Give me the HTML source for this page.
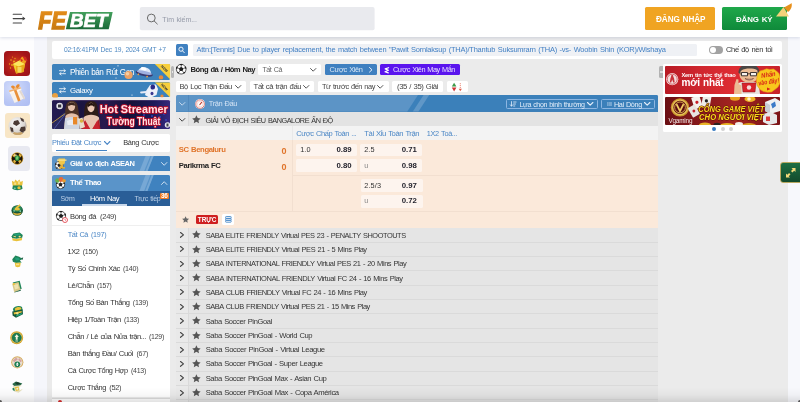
<!DOCTYPE html>
<html lang="vi"><head><meta charset="utf-8"><title>FEBET</title>
<style>
*{box-sizing:border-box;margin:0;padding:0}
html,body{width:800px;height:402px;overflow:hidden}
body{position:relative;background:#ebebeb;font-family:"Liberation Sans",sans-serif;color:#333;font-size:8.5px}
.a{position:absolute}
.t{position:absolute;white-space:nowrap;line-height:10px;word-spacing:.7px}
.b{font-weight:bold}
svg{position:absolute;overflow:visible}
#app{position:absolute;left:0;top:0;width:800px;height:402px;overflow:hidden;will-change:transform}
</style></head><body>
<div id="app">
<div class="a" style="left:0px;top:37px;width:34px;height:365px;background:#fdfdfe;"></div><div class="a" style="left:34px;top:37px;width:13px;height:365px;background:#f5f6fb;"></div><div class="a" style="left:788px;top:37px;width:12px;height:365px;background:#f7f8fc;"></div>
<div class="a" style="left:52px;top:41px;width:730px;height:18px;background:#fff;border-radius:2px"></div><div class="t" style="left:64.00px;top:44.500px;font-size:6.7px;color:#4f89c2;letter-spacing:-0.183px;">02:16:41PM Dec 19, 2024 GMT +7</div><div class="a" style="left:175.5px;top:44px;width:12.5px;height:11.5px;background:#3f80c0;border-radius:1.5px"></div><svg style="left:176.3px;top:44px" width="11" height="11.5" viewBox="0 0 11 11.5"><circle cx="5" cy="5.2" r="2.1" fill="none" stroke="#fff" stroke-width="0.9"/><path d="M6.6 6.9L8.3 8.7" stroke="#fff" stroke-width="0.9" stroke-linecap="round"/></svg><div class="a" style="left:193px;top:44px;width:504px;height:12px;background:#eff1f5;border-radius:1.5px"></div><div class="t" style="left:196.50px;top:44.500px;font-size:7.46px;color:#4380c4;letter-spacing:-0.218px;">Attn:[Tennis] Due to player replacement, the match between &quot;Pawit Sornlaksup (THA)/Thantub Suksumrarn (THA) -vs- Woobin Shin (KOR)/Wishaya</div><div class="a" style="left:708.7px;top:45.8px;width:14.8px;height:7.8px;background:#a2a2a2;border-radius:4px"></div><div class="a" style="left:709.5px;top:46.5px;width:6.4px;height:6.4px;background:#fff;border-radius:50%"></div><div class="t" style="left:726.00px;top:44.500px;font-size:7.51px;color:#333;letter-spacing:-0.318px;">Chế độ nền tối</div>
<div class="a" style="left:4.4px;top:50.9px;width:25.5px;height:25.5px;background:#a5161a;border-radius:3.5px;background:radial-gradient(circle at 45% 50%,#d8501a 0,#b8241a 38%,#a3151a 70%,#9a1218 100%)"></div><svg style="left:4.4px;top:50.9px" width="25.5" height="25.500" viewBox="0 0 25.500 25.500"><g fill="#f4b81c" opacity=".85"><circle cx="7" cy="9" r=".8"/><circle cx="5.500" cy="13" r=".7"/><circle cx="8.500" cy="6" r=".6"/><circle cx="10" cy="10.500" r="1"/><circle cx="6.500" cy="17" r=".7"/><circle cx="11" cy="7.500" r=".7"/><circle cx="8" cy="14" r=".9"/></g><path d="M9 13L15.500 9.500L21 13L19.500 21L12 22.500Z" fill="#f3cf2a"/><path d="M12 14.500L12 22.500L19.500 21L21 13Z" fill="#e8a818"/><path d="M9 13L15.500 9.500L21 13L14.500 15.500Z" fill="#fbe560"/><path d="M13.500 16H17.500V21.500H13.500Z" fill="#f7e070" opacity=".8"/><path d="M15 10L18 5.500L23 8.500L21 13Z" fill="#f0a01c"/><path d="M18.500 5L22 6L23.500 10L20.500 9.500ZM16 7.500L19 9L17.500 11Z" fill="#d02a20"/></svg><div class="a" style="left:4.4px;top:80.6px;width:25.5px;height:25px;background:#b8c6f5;border-radius:3.500px;background:radial-gradient(circle at 35% 30%,#d5defb 0,#b8c6f5 60%,#aebdf2 100%)"></div><svg style="left:4.400px;top:80.600px" width="25.500" height="25" viewBox="0 0 25.500 25"><path d="M5.500 11L16 7.500L21 17L10.500 22Z" fill="#f6f1ec"/><path d="M16 7.500L21 17L20 19L14.500 9Z" fill="#e2d8d0"/><path d="M5 9.500L16.500 6L17.500 9L6.500 12.800Z" fill="#fdf6ee"/><path d="M9.500 8.500L12 7.700L16.500 19.500L14 20.500Z" fill="#e8903a"/><path d="M5 9.500L16.500 6L17 7.500L5.500 11Z" fill="#f0b070"/><path d="M7 5.500C8.500 3.500 11 4.500 11.500 7.500C9.500 8.500 7.500 7.500 7 5.500ZM15.500 3.500C13.500 2.500 11.500 4.500 11.500 7.500C14 7.500 16 6 15.500 3.500Z" fill="#e88a30"/><circle cx="11.500" cy="7.300" r="1.200" fill="#f6c080"/></svg><div class="a" style="left:4.5px;top:113px;width:25px;height:25px;background:#f8e6c6;border-radius:3px"></div><svg style="left:4.5px;top:113px" width="25" height="25" viewBox="0 0 25 25"><defs><radialGradient id="sb" cx=".4" cy=".35" r=".7"><stop offset="0" stop-color="#fff"/><stop offset=".7" stop-color="#d8d4d0"/><stop offset="1" stop-color="#8a7a70"/></radialGradient></defs><circle cx="12.5" cy="13" r="9" fill="url(#sb)"/><path d="M9 8L13 7L15 10.5L11.5 13L8 11ZM16 14L20 13.5L20.5 17.5L17 19.5L14.5 17.5ZM5 14L8 15L8.5 19L6 18.5ZM15 4.5L18.5 6L19 9L16.5 8Z" fill="#4a3a34"/><path d="M8 20.5C11 22.5 15 22.5 18 20.5L16.5 19C13.5 20 11 20 9 19Z" fill="#c9a46a"/></svg><div class="a" style="left:7.5px;top:146px;width:22px;height:25px;background:#e8e9f1;border-radius:3.5px"></div><svg style="left:10.8px;top:152.2px" width="12.4" height="12.8" viewBox="0 0 20 20" preserveAspectRatio="none"><circle cx="10" cy="10" r="9.800" fill="#c9982c"/><circle cx="10" cy="10" r="8.600" fill="#1c140a"/><path d="M2.500 6L6 2.500L8 5L5 8.500ZM17.500 6L14 2.500L12 5L15 8.500ZM3 14L6 17.500L8.500 15L5.500 12ZM17 14L14 17.500L11.500 15L14.500 12Z" fill="#e2b13a"/><path d="M10 4.500L14.200 8L12.600 13.500H7.400L5.800 8Z" fill="#2e9a48"/><path d="M10 6L12 9L10.500 12H8.500L8 9Z" fill="#7fd070"/><ellipse cx="7" cy="5" rx="3" ry="1.600" fill="#fff3c0" opacity=".55"/></svg><svg style="left:10.8px;top:178.8px" width="12.8" height="11.6" viewBox="0 0 20 20" preserveAspectRatio="none"><path d="M2 9L1.500 3L5 5L7 1L10 4.500L13 1L15 5L18.500 3L18 9L17 12H3Z" fill="#e9c23c"/><path d="M5 6H8V10H5ZM11 4H14V9H11Z" fill="#f6e08a"/><path d="M3 11H17L18 17C15 20 5 20 2 17Z" fill="#1f8458"/><circle cx="12.500" cy="15" r="2.600" fill="#e9c23c"/><circle cx="6" cy="16" r="1.500" fill="#7ec8a0"/></svg><svg style="left:10.8px;top:203px" width="12.4" height="13" viewBox="0 0 20 20" preserveAspectRatio="none"><ellipse cx="10" cy="11.500" rx="9.300" ry="8" fill="#15573a"/><ellipse cx="10" cy="9" rx="7.500" ry="4.500" fill="#2a8a5a"/><path d="M7 7L14 2L15.500 4L10 9Z" fill="#e9c23c"/><ellipse cx="10" cy="9.500" rx="4.500" ry="2.200" fill="#e9c23c"/><path d="M3 14C6 17 14 17 17 14L16 17C13 19.500 7 19.500 4 17Z" fill="#d0a838"/><circle cx="5" cy="12" r="1.300" fill="#8ad0a8"/><circle cx="15" cy="12.500" r="1.300" fill="#8ad0a8"/></svg><svg style="left:10.6px;top:232px" width="12.4" height="9.6" viewBox="0 0 20 20" preserveAspectRatio="none"><path d="M1 9L4 3L14 1L19 6L18 12L9 14L2 13Z" fill="#1f8458"/><path d="M5 4L13 2.500L16 6L7 8Z" fill="#23a07a"/><path d="M2 13L9 14.500L18 12L17.500 17L9 19.500L2.500 17.500Z" fill="#e9c23c"/><path d="M4 9L8 10" stroke="#f6e08a" stroke-width="1.600"/><circle cx="14" cy="9.500" r="1.800" fill="#f6e08a"/></svg><svg style="left:11px;top:255px" width="12.6" height="12.4" viewBox="0 0 20 20" preserveAspectRatio="none"><path d="M2 7L7 1L13 3L18.500 6.500L14 9L17 12L8 13L3 11Z" fill="#1f8458"/><path d="M6 4L12 4.500L14 8L8 9Z" fill="#23a07a"/><path d="M6 12.500H15.500L14.500 18.500C12 20 9 20 7 18.500Z" fill="#e9c23c"/><path d="M8 14H13V16.500H8Z" fill="#f6e08a"/><path d="M16 5L19.500 4L18 8Z" fill="#15573a"/></svg><svg style="left:11px;top:280px" width="11.6" height="12.6" viewBox="0 0 20 20" preserveAspectRatio="none"><path d="M3 4L15 1L18.500 14L7 18.500Z" fill="#1f8458"/><path d="M2 6L13 3L16.500 15.500L5.500 19.500Z" fill="#d9c98a"/><path d="M5 8L11.500 6.200L13.500 13L7 15Z" fill="#efe3b0"/><path d="M5.500 19.500L16.500 15.500L17 17L6 20Z" fill="#15573a"/><circle cx="5" cy="6.500" r="1.800" fill="#e9c23c"/></svg><svg style="left:10.6px;top:305px" width="12.6" height="13.2" viewBox="0 0 20 20" preserveAspectRatio="none"><path d="M3 6C5 2 13 0 17.500 3L18.500 8L5 12Z" fill="#1f8458"/><path d="M6 5.500C9 3 13 2.500 16 4L16.500 6.500L7 9Z" fill="#e9c23c"/><path d="M2 10L18.500 7L19 14L8 19.500L2.500 16Z" fill="#15573a"/><path d="M4 11.500L17 9V11.500L5 14.500Z" fill="#e9c23c"/><path d="M8 15L17.500 12V14L8.500 18Z" fill="#23a07a"/><circle cx="10" cy="12.500" r="1.800" fill="#f6e08a"/></svg><svg style="left:10.200px;top:330.600px" width="13.400" height="13.400" viewBox="-10 -10 20 20"><circle r="9.700" fill="#d2a32a"/><circle r="8.300" fill="#efd070"/><circle r="7" fill="#1b7d52"/><circle r="7" fill="none" stroke="#0f5a3a" stroke-width=".8"/><path d="M0 -5.200L3.200 -1H1.400V3.200H-1.400V-1H-3.200Z" fill="#f7f4e0"/><path d="M-2 4.300H2V5.500H-2Z" fill="#f7f4e0"/></svg><svg style="left:10.800px;top:355.600px" width="12.600" height="12.600" viewBox="-10 -10 20 20"><circle r="9.700" fill="#d6ae62"/><circle r="8.200" fill="#e9ddd0"/><path d="M-7 -3L-2 -7.500L1 -5L-5 0ZM3 -7L7.500 -2L5 0L1.500 -4Z" fill="#d4a4a0"/><circle cx="0" cy="3.200" r="4.600" fill="#1b7d52"/><path d="M0 0L2.300 3.400H-2.300Z" fill="#fff"/><path d="M-1 3.400H1V6H-1Z" fill="#fff"/></svg><svg style="left:10.6px;top:381px" width="12.6" height="12.4" viewBox="0 0 20 20" preserveAspectRatio="none"><path d="M2 5L8 1L18 4L14 8L5 8Z" fill="#2a6a4a"/><path d="M6 3L11 2L15 4L10 6Z" fill="#1a3a2a"/><path d="M3 8L16 7L18 14L12 19L5 17Z" fill="#e8e2c0"/><path d="M6 10L12 9L13 15L8 16Z" fill="#e9c23c"/><path d="M13 9L17.500 8.500L18 13L14 15Z" fill="#fff"/><path d="M2 12L5 11L6 16L3 15Z" fill="#1f8458"/><circle cx="10" cy="12.500" r="1.600" fill="#f4f0d8"/></svg><div class="a" style="left:52px;top:64px;width:118.3px;height:15.6px;background:#3d82bc;border-radius:1.5px;overflow:hidden"></div><div class="a" style="left:52px;top:82.3px;width:118.3px;height:15.2px;background:#3d82bc;border-radius:1.5px;overflow:hidden"></div><svg style="left:52px;top:64px" width="118.3" height="34" viewBox="0 0 118.3 34">
<defs><clipPath id="c1"><rect x="0" y="0" width="118.3" height="15.6" rx="1.5"/></clipPath><clipPath id="c2"><rect x="0" y="18.3" width="118.3" height="15.2" rx="1.5"/></clipPath></defs>
<g clip-path="url(#c1)">
<path d="M102.800 0H118.300V15.600Z" fill="#f7cf3c"/>
<g transform="rotate(12 92.500 8)"><ellipse cx="92.500" cy="9.600" rx="8.800" ry="2.600" fill="#3a3a72"/><path d="M86 8.500C86 1.500 99 1.500 99 8.500Z" fill="#dfe8fa"/><ellipse cx="91" cy="5" rx="3" ry="1.600" fill="#fff"/><ellipse cx="92.500" cy="8.600" rx="7.800" ry="1.700" fill="#9fb0e0"/><circle cx="87" cy="11.600" r=".9" fill="#f0a040"/><circle cx="96" cy="12" r=".9" fill="#f0a040"/></g>

<circle cx="109" cy="13.5" r="2.2" fill="#e88a3a"/>
<circle cx="66" cy="1.8" r=".6" fill="#fff"/><circle cx="64" cy="14" r=".6" fill="#fff"/>
</g>
<g clip-path="url(#c2)">
<path d="M102.800 18.300H118.300V33.500Z" fill="#f7cf3c"/>
<path d="M94 27L98 21L104 20.500L106 25L104.500 31L98 34L93 31Z" fill="#eef1fa"/><ellipse cx="100.800" cy="23" rx="2.300" ry="2.600" fill="#2a2a86"/><ellipse cx="100" cy="29.500" rx="1.500" ry="1.700" fill="#3a3a90"/><path d="M89 28.500L94.500 28" stroke="#e6eaf6" stroke-width="1.800" stroke-linecap="round"/>
<circle cx="3" cy="32" r="3" fill="#e9a040"/><circle cx="80" cy="31" r=".6" fill="#fff"/><circle cx="110" cy="32" r="1.6" fill="#e88a3a"/>
</g>
<g fill="#333" font-family="Liberation Sans,sans-serif" font-weight="bold" font-size="3.6"><text transform="translate(108.600 2.600) rotate(45)">NEW</text><text transform="translate(108.600 20.900) rotate(45)">NEW</text></g>
</svg><svg style="left:59.3px;top:68.8px" width="7" height="6.4" viewBox="0 0 7 6.4"><g stroke="#fff" stroke-width=".8" fill="none" stroke-linecap="round" stroke-linejoin="round"><path d="M.5 1.7H6.3M4.9 .4L6.3 1.7L4.9 3M6.5 4.7H.7M2.1 3.4L.7 4.7L2.1 6"/></g></svg><div class="t" style="left:70.00px;top:67.500px;font-size:8.2px;color:#fff;letter-spacing:-0.462px;">Phiên bản Rút Gọn</div><svg style="left:52px;top:64px" width="118.300" height="15.600" viewBox="0 0 118.300 15.600"><circle cx="76.600" cy="11" r="4.100" fill="#eda265"/><circle cx="75.500" cy="9.800" r="1.800" fill="#f6cfa4"/></svg><svg style="left:59.3px;top:86.8px" width="7" height="6.4" viewBox="0 0 7 6.4"><g stroke="#fff" stroke-width=".8" fill="none" stroke-linecap="round" stroke-linejoin="round"><path d="M.5 1.7H6.3M4.9 .4L6.3 1.7L4.9 3M6.5 4.7H.7M2.1 3.4L.7 4.7L2.1 6"/></g></svg><div class="t" style="left:70.00px;top:85.500px;font-size:7.88px;color:#fff;letter-spacing:-0.338px;">Galaxy</div><div class="a" style="left:51.8px;top:99.8px;width:118.6px;height:29.4px;background:#17123a;border-radius:1.5px;overflow:hidden;background:linear-gradient(95deg,#241c52 0,#1a1440 25%,#2a1a4e 45%,#161038 65%,#1c1a5a 85%,#3a2a80 100%)"><svg style="left:0;top:0" width="118.6" height="29.4" viewBox="0 0 118.6 29.4">
<g fill="#3a48d0" opacity=".75"><circle cx="100" cy="16" r="1"/><circle cx="104" cy="13" r="1"/><circle cx="108" cy="17" r="1"/><circle cx="112" cy="14" r="1"/><circle cx="96" cy="20" r="1"/><circle cx="106" cy="21" r="1"/><circle cx="114" cy="20" r="1"/><circle cx="92" cy="15" r="1"/><circle cx="88" cy="18" r="1"/><circle cx="110" cy="10" r="1"/></g>
<path d="M0 24L12 12L20 29.4H0Z" fill="#2c2c62" opacity=".8"/><path d="M0 23L14 13" stroke="#d8b040" stroke-width=".8"/><path d="M2 29L14 13" stroke="#6070d0" stroke-width=".6"/>
<circle cx="7.600" cy="6" r="3.300" fill="#e4e4ea"/><path d="M6 4.500H9.200V7.500H6Z" fill="#33333c"/>
<path d="M14 6C14.500 1 21 -1 24.500 3C27 7 26 13 28 18L27 29.400H11.500L13.500 18C13 13 13 9 14 6Z" fill="#4a3026"/>
<ellipse cx="19.500" cy="6.500" rx="3.600" ry="4.600" fill="#e6c2ae"/><path d="M16 4.500C17 2 21 1.500 23 4L22.500 6C21 4.500 18 4.500 16.500 6.500Z" fill="#3c261e"/>
<path d="M13.500 16C16 12.500 23 12.500 26.500 16L27.500 29.400H12Z" fill="#e2bda8"/><path d="M13 18.500C16.500 16.500 23.500 16.500 27 18.500L27.500 29.400H12Z" fill="#cfd6e2"/><path d="M15 21C18 19.500 22 19.500 25 21L24.500 25H15.500Z" fill="#e9edf4"/>
<path d="M21 17H25.200V24.500H21Z" fill="#e8882a"/>
<path d="M33 6.500C33 1 41 -1 44.500 3.500C46.500 8 45.500 14 47.500 20L47 29.400H30L32 20C32 14 32 10 33 6.500Z" fill="#2e1c18"/>
<ellipse cx="39" cy="7.500" rx="3.500" ry="4.700" fill="#ecc8b4"/><path d="M35.500 5C36.500 2.500 41 2 42.500 5L42 7C40.500 5 38 5 36 7.500Z" fill="#24140f"/>
<path d="M31.500 17.500C34.500 14 43.500 14 47 17.500L48 29.400H30Z" fill="#e8c4b0"/><path d="M31 19L37.500 29.400H29.500ZM47 19L40.500 29.400H48.500Z" fill="#b01c26"/><path d="M33 20L38.500 29.400H31ZM45.500 20L40 29.400H47.500Z" fill="#c8242e"/>
<path d="M26 19L30.500 17.500L33 27L28 29Z" fill="#e8dcc8"/><circle cx="29.500" cy="21" r="1.800" fill="#d8b040"/>

<circle cx="115.500" cy="25" r="2.700" fill="#e6e6ee"/><path d="M114.500 23.500H116.500V26.500H114.500Z" fill="#44444c"/>
<path d="M0 0H118.600" stroke="#c8a0d0" stroke-width=".8" opacity=".5"/>
<g font-family="Liberation Sans,sans-serif" font-weight="bold" fill="#ffe3e6" stroke="#b8102a" stroke-width="1.800" paint-order="stroke" stroke-linejoin="round">
<text x="47.800" y="13.200" font-size="11.600" textLength="68" lengthAdjust="spacingAndGlyphs">Hot Streamer</text>
<text x="54.800" y="25.300" font-size="10.400" textLength="53.500" lengthAdjust="spacingAndGlyphs">Tường Thuật</text></g>
</svg></div><div class="a" style="left:52px;top:133.9px;width:118.3px;height:18.4px;background:#fff;border-radius:1.500px"></div><div class="t" style="left:52.00px;top:137.500px;font-size:7.4px;color:#4a86c6;letter-spacing:-0.415px;">Phiếu Đặt Cược</div><svg style="left:103.600px;top:141px" width="6.400" height="4" viewBox="0 0 6.4 4"><path d="M.5 .5L3.200 3.300L5.900 .5" fill="none" stroke="#4a86c6" stroke-width="1.100" stroke-linecap="round" stroke-linejoin="round"/></svg><div class="t" style="left:123.30px;top:137.500px;font-size:7.43px;color:#333;letter-spacing:-0.427px;">Bảng Cược</div><div class="a" style="left:56px;top:150.2px;width:51px;height:1.3px;background:#4584c4;"></div><div class="a" style="left:52px;top:156px;width:118.3px;height:15.4px;background:#5a94c9;border-radius:2px 2px 0 0;overflow:hidden"><svg style="left:0;top:0" width="118.3" height="15.4" viewBox="0 0 118.3 15.4"><polygon points="101.5,0.0 118.3,0.0 118.3,15.4 95.3,15.4" fill="#3f82bf"/><polygon points="93.6,0.0 98.3,0.0 92.1,15.4 87.4,15.4" fill="#77a8d5"/><polygon points="99.6,0.0 101.7,0.0 95.5,15.4 93.4,15.4" fill="#77a8d5"/></svg></div><div class="a" style="left:52px;top:175px;width:118.3px;height:16px;background:#5a94c9;border-radius:2px 2px 0 0;overflow:hidden"><svg style="left:0;top:0" width="118.3" height="16" viewBox="0 0 118.3 16"><polygon points="101.5,0.0 118.3,0.0 118.3,16.0 95.3,16.0" fill="#3f82bf"/><polygon points="93.6,0.0 98.3,0.0 92.1,16.0 87.4,16.0" fill="#77a8d5"/><polygon points="99.6,0.0 101.7,0.0 95.5,16.0 93.4,16.0" fill="#77a8d5"/></svg></div><svg style="left:54.5px;top:161px" width="8.5" height="8.5" viewBox="-10 -10 20 20"><circle r="9.300" fill="#fff" stroke="#1e1e1e" stroke-width="1.400"/><path d="M0 -4.600L4.400 -1.400L2.700 3.700H-2.700L-4.400 -1.400Z" fill="#1e1e1e"/><path d="M0 -9.500V-4.600M9 -3L4.400 -1.400M5.600 7.700L2.700 3.700M-5.600 7.700L-2.700 3.700M-9 -3L-4.400 -1.400" stroke="#1e1e1e" stroke-width="1.300"/><path d="M-3.600 -9.300L0 -7.200L3.600 -9.300C1.500 -10.200 -1.500 -10.200 -3.600 -9.300ZM7.700 -6L6.800 -2.200L9.900 0C10 -2.500 9.200 -4.500 7.700 -6ZM-7.700 -6L-6.800 -2.200L-9.900 0C-10 -2.500 -9.200 -4.500 -7.700 -6ZM8.600 4.800L5 6L4.800 9C6.500 8 7.900 6.600 8.600 4.800ZM-8.600 4.800L-5 6L-4.800 9C-6.500 8 -7.900 6.600 -8.600 4.800Z" fill="#1e1e1e"/></svg><svg style="left:56.500px;top:157px" width="9.500" height="12" viewBox="0 0 9.500 12"><path d="M1.500 1.500H8V5C8 7 6.500 8 4.800 8C3 8 1.500 7 1.500 5Z" fill="#f2c84a"/><path d="M0 2.500H9.500V3.800H0Z" fill="#f7e08a"/><path d="M3.500 8H6V10H8V11.500H2V10H3.500Z" fill="#e8b030"/></svg><div class="t b" style="left:70.00px;top:158.500px;font-size:7.47px;color:#fff;letter-spacing:-0.438px;">Giải vô địch ASEAN</div><svg style="left:160.800px;top:162px" width="6.400" height="4" viewBox="0 0 6.400 4"><path d="M.5 .5L3.200 3.300L5.900 .5" fill="none" stroke="#dbe8f5" stroke-width=".9" stroke-linecap="round" stroke-linejoin="round"/></svg><svg style="left:56px;top:180px" width="9" height="9" viewBox="-10 -10 20 20"><circle r="9.300" fill="#fff" stroke="#1e1e1e" stroke-width="1.400"/><path d="M0 -4.600L4.400 -1.400L2.700 3.700H-2.700L-4.400 -1.400Z" fill="#1e1e1e"/><path d="M0 -9.500V-4.600M9 -3L4.400 -1.400M5.600 7.700L2.700 3.700M-5.600 7.700L-2.700 3.700M-9 -3L-4.400 -1.400" stroke="#1e1e1e" stroke-width="1.300"/><path d="M-3.600 -9.300L0 -7.200L3.600 -9.300C1.500 -10.200 -1.500 -10.200 -3.600 -9.300ZM7.700 -6L6.800 -2.200L9.900 0C10 -2.500 9.200 -4.500 7.700 -6ZM-7.700 -6L-6.800 -2.200L-9.900 0C-10 -2.500 -9.200 -4.500 -7.700 -6ZM8.600 4.800L5 6L4.800 9C6.500 8 7.900 6.600 8.600 4.800ZM-8.600 4.800L-5 6L-4.800 9C-6.500 8 -7.900 6.600 -8.600 4.800Z" fill="#1e1e1e"/></svg><svg style="left:54.500px;top:177px" width="11" height="6" viewBox="0 0 11 6"><circle cx="2.500" cy="3.500" r="2.300" fill="#6ab04a"/><circle cx="6" cy="2.500" r="2.400" fill="#e86a3a"/><circle cx="9" cy="3.800" r="1.800" fill="#e8a030"/></svg><div class="t b" style="left:70.00px;top:177.500px;font-size:7.6px;color:#fff;letter-spacing:-0.435px;">Thể Thao</div><svg style="left:160.800px;top:181px" width="6.400" height="4" viewBox="0 0 6.400 4"><path d="M.5 3.500L3.200 .7L5.900 3.500" fill="none" stroke="#dbe8f5" stroke-width=".9" stroke-linecap="round" stroke-linejoin="round"/></svg><div class="a" style="left:52px;top:191px;width:118.3px;height:15.4px;background:#2a5e97;"></div><div class="t" style="left:60.60px;top:193.500px;font-size:7.03px;color:#b9cee6;letter-spacing:-0.419px;">Sớm</div><div class="t" style="left:90.00px;top:193.500px;font-size:7.58px;color:#fff;letter-spacing:-0.470px;">Hôm Nay</div><div class="t" style="left:134.60px;top:194.000px;font-size:7.12px;color:#b9cee6;letter-spacing:-0.338px;">Trực tiếp</div><div class="a" style="left:82px;top:204.2px;width:44.5px;height:1.4px;background:#c9d8ea;"></div><div class="a" style="left:159.5px;top:192.6px;width:9.6px;height:6.6px;background:#f07a22;border-radius:1px"></div><div class="t b" style="left:161.00px;top:190.500px;font-size:6.37px;color:#fff;letter-spacing:-0.293px;">36</div><div class="a" style="left:52px;top:206.3px;width:118.3px;height:191.2px;background:#fff;"></div><div class="a" style="left:52px;top:225.2px;width:118.3px;height:0.7px;background:#efefef;"></div><svg style="left:56px;top:211px" width="10" height="10" viewBox="-10 -10 20 20"><circle r="9.300" fill="#fff" stroke="#1e1e1e" stroke-width="1.400"/><path d="M0 -4.600L4.400 -1.400L2.700 3.700H-2.700L-4.400 -1.400Z" fill="#1e1e1e"/><path d="M0 -9.500V-4.600M9 -3L4.400 -1.400M5.600 7.700L2.700 3.700M-5.600 7.700L-2.700 3.700M-9 -3L-4.400 -1.400" stroke="#1e1e1e" stroke-width="1.300"/><path d="M-3.600 -9.300L0 -7.200L3.600 -9.300C1.500 -10.200 -1.500 -10.200 -3.600 -9.300ZM7.700 -6L6.800 -2.200L9.900 0C10 -2.500 9.200 -4.500 7.700 -6ZM-7.700 -6L-6.800 -2.200L-9.900 0C-10 -2.500 -9.200 -4.500 -7.700 -6ZM8.600 4.800L5 6L4.800 9C6.500 8 7.900 6.600 8.600 4.800ZM-8.600 4.800L-5 6L-4.800 9C-6.500 8 -7.900 6.600 -8.600 4.800Z" fill="#1e1e1e"/></svg><svg style="left:62px;top:217px" width="6" height="6" viewBox="-5 -5 10 10"><circle r="4.200" fill="#fff" stroke="#e0303a" stroke-width="1.300"/><path d="M0 -2V0L1.600 1" fill="none" stroke="#e0303a" stroke-width="1"/></svg><div class="t" style="left:70.00px;top:211.500px;font-size:7.61px;color:#333;letter-spacing:-0.436px;">Bóng đá</div><div class="t" style="left:100.00px;top:211.500px;font-size:7.61px;color:#444;letter-spacing:-0.293px;">(249)</div><div class="t" style="left:67.70px;top:229.500px;font-size:7.37px;color:#4a86c5;letter-spacing:-0.420px;">Tất Cả</div><div class="t" style="left:91.00px;top:230.000px;font-size:7.14px;color:#4a86c5;letter-spacing:-0.274px;">(197)</div><div class="t" style="left:67.50px;top:246.500px;font-size:7.35px;color:#333;letter-spacing:-0.359px;">1X2</div><div class="t" style="left:82.70px;top:246.500px;font-size:7.0px;color:#444;letter-spacing:-0.268px;">(150)</div><div class="t" style="left:67.70px;top:263.500px;font-size:7.54px;color:#333;letter-spacing:-0.453px;">Tỷ Số Chính Xác</div><div class="t" style="left:123.00px;top:264.000px;font-size:7.14px;color:#444;letter-spacing:-0.274px;">(140)</div><div class="t" style="left:67.70px;top:280.500px;font-size:7.58px;color:#333;letter-spacing:-0.337px;">Lẻ/Chẵn</div><div class="t" style="left:97.00px;top:280.500px;font-size:6.77px;color:#444;letter-spacing:-0.261px;">(157)</div><div class="t" style="left:67.70px;top:297.500px;font-size:7.54px;color:#333;letter-spacing:-0.450px;">Tổng Số Bàn Thắng</div><div class="t" style="left:132.80px;top:298.000px;font-size:7.1px;color:#444;letter-spacing:-0.275px;">(139)</div><div class="t" style="left:67.70px;top:314.500px;font-size:7.63px;color:#333;letter-spacing:-0.388px;">Hiệp 1/Toàn Trận</div><div class="t" style="left:124.00px;top:314.500px;font-size:7.0px;color:#444;letter-spacing:-0.268px;">(133)</div><div class="t" style="left:67.70px;top:331.500px;font-size:7.56px;color:#333;letter-spacing:-0.421px;">Chẵn / Lẻ của Nửa trận...</div><div class="t" style="left:149.00px;top:331.500px;font-size:7.0px;color:#444;letter-spacing:-0.268px;">(129)</div><div class="t" style="left:67.70px;top:348.500px;font-size:7.67px;color:#333;letter-spacing:-0.422px;">Bàn thắng Đầu/ Cuối</div><div class="t" style="left:136.50px;top:348.500px;font-size:7.05px;color:#444;letter-spacing:-0.259px;">(67)</div><div class="t" style="left:67.70px;top:365.500px;font-size:7.39px;color:#333;letter-spacing:-0.471px;">Cá Cược Tổng Hợp</div><div class="t" style="left:131.00px;top:365.500px;font-size:7.0px;color:#444;letter-spacing:-0.268px;">(413)</div><div class="t" style="left:67.70px;top:382.500px;font-size:7.4px;color:#333;letter-spacing:-0.416px;">Cược Thắng</div><div class="t" style="left:109.30px;top:382.500px;font-size:7.35px;color:#444;letter-spacing:-0.268px;">(52)</div><div class="a" style="left:52px;top:398px;width:118.3px;height:0.7px;background:#ddd;"></div><div class="a" style="left:52px;top:398.7px;width:118.3px;height:4px;background:#fff;"></div><div class="a" style="left:57.5px;top:399.5px;width:4px;height:4px;background:#d83030;border-radius:50%"></div><div class="a" style="left:170.8px;top:65.8px;width:3.5px;height:11.8px;background:#b6b6b6;border-radius:1.500px"></div><div class="a" style="left:171.6px;top:70.6px;width:1.9px;height:0.5px;background:#e6e6e6;"></div><div class="a" style="left:171.6px;top:72.2px;width:1.9px;height:0.5px;background:#e6e6e6;"></div>
<svg style="left:176px;top:64.2px" width="10.4" height="10.4" viewBox="-10 -10 20 20"><circle r="9.300" fill="#fff" stroke="#1e1e1e" stroke-width="1.400"/><path d="M0 -4.600L4.400 -1.400L2.700 3.700H-2.700L-4.400 -1.400Z" fill="#1e1e1e"/><path d="M0 -9.500V-4.600M9 -3L4.400 -1.400M5.600 7.700L2.700 3.700M-5.600 7.700L-2.700 3.700M-9 -3L-4.400 -1.400" stroke="#1e1e1e" stroke-width="1.300"/><path d="M-3.600 -9.300L0 -7.200L3.600 -9.300C1.500 -10.200 -1.500 -10.200 -3.600 -9.300ZM7.700 -6L6.800 -2.200L9.900 0C10 -2.500 9.200 -4.500 7.700 -6ZM-7.700 -6L-6.800 -2.200L-9.900 0C-10 -2.500 -9.200 -4.500 -7.700 -6ZM8.600 4.800L5 6L4.800 9C6.500 8 7.900 6.600 8.600 4.800ZM-8.600 4.800L-5 6L-4.800 9C-6.500 8 -7.900 6.600 -8.600 4.800Z" fill="#1e1e1e"/></svg><div class="t b" style="left:190.60px;top:64.500px;font-size:7.66px;color:#222;letter-spacing:-0.507px;">Bóng đá / Hôm Nay</div><div class="a" style="left:258px;top:64px;width:63.4px;height:11.2px;background:#fff;border-radius:1.5px"></div><div class="t" style="left:262.40px;top:65.000px;font-size:7.12px;color:#666;letter-spacing:-0.411px;">Tất Cả</div><svg style="left:310px;top:68.0px" width="6.4" height="3.6" viewBox="0 0 6.4 3.6"><path d="M.5 .5L3.2 3.2L5.9 .5" fill="none" stroke="#444" stroke-width="0.9" stroke-linecap="round" stroke-linejoin="round"/></svg><div class="a" style="left:325px;top:64px;width:51.6px;height:11.2px;background:#3f80c0;border-radius:1.5px"></div><div class="t" style="left:329.60px;top:64.500px;font-size:7.41px;color:#d8e6f5;letter-spacing:-0.407px;">Cược Xiên</div><svg style="left:369.2px;top:67.0px" width="3.4" height="5.6" viewBox="0 0 3.4 5.6"><path d="M.5 .5L3.0 2.8L.5 5.1" fill="none" stroke="#e4eefa" stroke-width="1" stroke-linecap="round" stroke-linejoin="round"/></svg><div class="a" style="left:380px;top:64px;width:79.6px;height:11.2px;background:#5a14ee;border-radius:1.5px"></div><svg style="left:384px;top:66.600px" width="5.500" height="6.500" viewBox="0 0 5.500 6.500"><path d="M4.600 .7L1.200 1.900L4.400 3.300L1 4.800L4.300 5.900" fill="none" stroke="#fff" stroke-width="1.200" stroke-linejoin="round" stroke-linecap="round"/></svg><div class="t" style="left:393.00px;top:64.500px;font-size:7.33px;color:#e8e0ff;letter-spacing:-0.451px;">Cược Xiên May Mắn</div><div class="a" style="left:176px;top:80.6px;width:70px;height:11.6px;background:#fff;border-radius:1.500px"></div><div class="t" style="left:179.40px;top:81.500px;font-size:7.64px;color:#444;letter-spacing:-0.456px;">Bộ Lọc Trận Đấu</div><svg style="left:234.8px;top:84.8px" width="6.4" height="3.6" viewBox="0 0 6.4 3.6"><path d="M.5 .5L3.2 3.2L5.9 .5" fill="none" stroke="#444" stroke-width="0.9" stroke-linecap="round" stroke-linejoin="round"/></svg><div class="a" style="left:249.6px;top:80.6px;width:64.79999999999998px;height:11.6px;background:#fff;border-radius:1.500px"></div><div class="t" style="left:253.60px;top:81.500px;font-size:7.71px;color:#444;letter-spacing:-0.424px;">Tất cả trận đấu</div><svg style="left:303.4px;top:84.8px" width="6.4" height="3.6" viewBox="0 0 6.4 3.6"><path d="M.5 .5L3.2 3.2L5.9 .5" fill="none" stroke="#444" stroke-width="0.9" stroke-linecap="round" stroke-linejoin="round"/></svg><div class="a" style="left:317.6px;top:80.6px;width:71.0px;height:11.6px;background:#fff;border-radius:1.500px"></div><div class="t" style="left:322.00px;top:81.500px;font-size:7.38px;color:#444;letter-spacing:-0.431px;">Từ trước đến nay</div><svg style="left:377.4px;top:84.8px" width="6.4" height="3.6" viewBox="0 0 6.4 3.6"><path d="M.5 .5L3.2 3.2L5.9 .5" fill="none" stroke="#444" stroke-width="0.9" stroke-linecap="round" stroke-linejoin="round"/></svg><div class="a" style="left:392px;top:80.6px;width:51px;height:11.6px;background:#fff;border-radius:1.500px"></div><div class="t" style="left:397.00px;top:81.500px;font-size:7.73px;color:#444;letter-spacing:-0.413px;">(35 / 35) Giải</div><div class="a" style="left:447px;top:80.6px;width:20.5px;height:11.6px;background:#fff;border-radius:1.500px"></div><svg style="left:447px;top:80.600px" width="20.500" height="11.600" viewBox="0 0 20.500 11.600"><path d="M7.100 1.800L9.400 5.600H4.800Z" fill="#3f9a4a"/><path d="M7.100 10.400L9.400 6.600H4.800Z" fill="#cf3434"/><path d="M13.300 2.200V7.500" stroke="#e8705a" stroke-width=".9" stroke-dasharray="1 .9"/><path d="M13.300 10.300L14.900 7.800H11.700Z" fill="#e05a4a"/></svg><div class="a" style="left:175.6px;top:95.3px;width:482.4px;height:16.7px;background:#5c94c6;border-radius:1.500px 1.500px 0 0;overflow:hidden"><svg style="left:0;top:0" width="482.4" height="16.700" viewBox="0 0 482.4 16.700"><polygon points="242.0,0 482.4,0 482.4,16.700 231.1,16.700" fill="#3b80ba"/><polygon points="247.6,0 253.2,0 242.3,16.700 236.7,16.700" fill="#6097c7"/><rect x="0" y="16.100" width="482.4" height=".6" fill="#2f6faa" opacity=".35"/></svg></div><div class="a" style="left:188px;top:95.3px;width:0.6px;height:16.7px;background:#5088bc;"></div><svg style="left:178.7px;top:102.4px" width="6.4" height="3.6" viewBox="0 0 6.4 3.6"><path d="M.5 .5L3.2 3.2L5.9 .5" fill="none" stroke="#cfe0f3" stroke-width="0.9" stroke-linecap="round" stroke-linejoin="round"/></svg><svg style="left:194.900px;top:98.500px" width="10.200" height="10.200" viewBox="-10 -10 20 20"><circle r="9.800" fill="#fff"/><circle r="8.400" fill="none" stroke="#cf3d33" stroke-width="1.300"/><circle r="5.400" fill="none" stroke="#eab0aa" stroke-width=".9"/><path d="M-.6 1L3 -3.400" stroke="#c0392b" stroke-width="2" stroke-linecap="round"/></svg><div class="t" style="left:208.80px;top:98.500px;font-size:7.44px;color:#d3e3f4;letter-spacing:-0.405px;">Trận Đấu</div><div class="a" style="left:506px;top:99px;width:91.60000000000002px;height:9.6px;background:transparent;border:.6px solid #8db6e2;border-radius:1.500px"></div><div class="a" style="left:601px;top:99px;width:53.60000000000002px;height:9.6px;background:transparent;border:.6px solid #8db6e2;border-radius:1.500px"></div><svg style="left:509.800px;top:100.800px" width="6.400" height="6" viewBox="0 0 6.400 6"><g stroke="#e4eefa" stroke-width=".8" fill="none" stroke-linecap="round"><path d="M1.500 .6V5M.3 3.800L1.500 5.200L2.700 3.800M3.600 1H6.100M3.600 3H5.500M3.600 5H4.800"/></g></svg><div class="t" style="left:519.50px;top:100.000px;font-size:7.08px;color:#e4eefa;letter-spacing:-0.396px;">Lựa chọn bình thường</div><svg style="left:586.8px;top:102.3px" width="6.4" height="3.6" viewBox="0 0 6.4 3.6"><path d="M.5 .5L3.2 3.2L5.9 .5" fill="none" stroke="#e4eefa" stroke-width="1.1" stroke-linecap="round" stroke-linejoin="round"/></svg><svg style="left:606.800px;top:101.800px" width="5" height="4" viewBox="0 0 5 4"><g stroke="#e4eefa" stroke-width=".7" stroke-linecap="round"><path d="M.4 1H.8M1.800 1H4.600M.4 3H.8M1.800 3H4.600"/></g></svg><div class="t" style="left:614.00px;top:99.500px;font-size:7.27px;color:#e4eefa;letter-spacing:-0.401px;">Hai Dòng</div><svg style="left:644px;top:102.3px" width="6.4" height="3.6" viewBox="0 0 6.4 3.6"><path d="M.5 .5L3.2 3.2L5.9 .5" fill="none" stroke="#e4eefa" stroke-width="1.1" stroke-linecap="round" stroke-linejoin="round"/></svg><div class="a" style="left:175.6px;top:112px;width:482.4px;height:14.4px;background:#e3e3e3;"></div><div class="a" style="left:175.6px;top:112px;width:12.6px;height:14.4px;background:#e8e8e8;"></div><div class="a" style="left:188.2px;top:112px;width:0.7px;height:14.4px;background:#d9d9d9;"></div><svg style="left:178.7px;top:118.2px" width="6.4" height="3.6" viewBox="0 0 6.4 3.6"><path d="M.5 .5L3.2 3.2L5.9 .5" fill="none" stroke="#333" stroke-width="0.9" stroke-linecap="round" stroke-linejoin="round"/></svg><svg style="left:192px;top:115.1px" width="8.8" height="8.8" viewBox="0 0 20 20"><path d="M10 .8L12.9 7L19.6 7.7L14.600 12.300L16 19L10 15.600L4 19L5.400 12.300L.4 7.700L7.100 7Z" fill="#555"/></svg><div class="t" style="left:205.50px;top:115.500px;font-size:7.31px;color:#333;letter-spacing:-0.473px;">GIẢI VÔ ĐỊCH SIÊU BANGALORE ẤN ĐỘ</div><div class="a" style="left:175.6px;top:126.4px;width:482.4px;height:13.6px;background:#f3f3f3;"></div><div class="a" style="left:292.4px;top:126.4px;width:0.7px;height:13.6px;background:#e9e9e9;"></div><div class="t" style="left:296.30px;top:128.500px;font-size:7.47px;color:#4a86c5;letter-spacing:-0.417px;">Cược Chấp Toàn ...</div><div class="t" style="left:364.30px;top:128.500px;font-size:7.67px;color:#4a86c5;letter-spacing:-0.416px;">Tài Xỉu Toàn Trận</div><div class="t" style="left:426.80px;top:128.500px;font-size:7.34px;color:#4a86c5;letter-spacing:-0.342px;">1X2 Toà...</div><div class="a" style="left:175.6px;top:140px;width:482.4px;height:88.3px;background:#fbe9da;"></div><div class="a" style="left:292.4px;top:140px;width:0.7px;height:70.5px;background:#f2dfd0;"></div><div class="a" style="left:293px;top:175px;width:365px;height:0.7px;background:#f2dfd0;"></div><div class="a" style="left:175.6px;top:210.5px;width:482.4px;height:0.7px;background:#f2dfd0;"></div><div class="t b" style="left:178.80px;top:144.500px;font-size:7.7px;color:#e0742a;letter-spacing:-0.409px;">SC Bengaluru</div><div class="t b" style="left:178.80px;top:160.500px;font-size:7.71px;color:#222;letter-spacing:-0.402px;">Parikrma FC</div><div class="t b" style="left:281.50px;top:146.000px;font-size:9px;color:#e0742a;letter-spacing:0px;">0</div><div class="t b" style="left:281.50px;top:162.000px;font-size:9px;color:#e0742a;letter-spacing:0px;">0</div><div class="a" style="left:296.4px;top:143.6px;width:60.60000000000002px;height:12.300000000000011px;background:#fdf4ee;border-radius:1.500px"></div><div class="t" style="left:300.20px;top:144.500px;font-size:7.3px;color:#333;letter-spacing:0.12px;">1.0</div><div class="t b" style="right:448.40px;top:144.500px;font-size:7.8px;color:#1e1e28;letter-spacing:0px;">0.89</div><div class="a" style="left:296.4px;top:159.4px;width:60.60000000000002px;height:12.299999999999983px;background:#fdf4ee;border-radius:1.500px"></div><div class="t b" style="right:448.40px;top:160.500px;font-size:7.8px;color:#1e1e28;letter-spacing:0px;">0.80</div><div class="a" style="left:360.4px;top:143.6px;width:62.10000000000002px;height:12.300000000000011px;background:#fdf4ee;border-radius:1.500px"></div><div class="t" style="left:364.20px;top:144.500px;font-size:7.3px;color:#333;letter-spacing:0.12px;">2.5</div><div class="t b" style="right:383.20px;top:144.500px;font-size:7.8px;color:#1e1e28;letter-spacing:0px;">0.71</div><div class="a" style="left:360.4px;top:159.4px;width:62.10000000000002px;height:12.299999999999983px;background:#fdf4ee;border-radius:1.500px"></div><div class="t" style="left:364.20px;top:160.500px;font-size:7.3px;color:#888;letter-spacing:0.12px;">u</div><div class="t b" style="right:383.20px;top:160.500px;font-size:7.8px;color:#1e1e28;letter-spacing:0px;">0.98</div><div class="a" style="left:360.5px;top:179.3px;width:62.0px;height:12.5px;background:#fdf4ee;border-radius:1.500px"></div><div class="t" style="left:364.30px;top:180.500px;font-size:7.3px;color:#333;letter-spacing:0.12px;">2.5/3</div><div class="t b" style="right:383.20px;top:180.500px;font-size:7.8px;color:#1e1e28;letter-spacing:0px;">0.97</div><div class="a" style="left:360.5px;top:195px;width:62.0px;height:12.5px;background:#fdf4ee;border-radius:1.500px"></div><div class="t" style="left:364.30px;top:195.500px;font-size:7.3px;color:#888;letter-spacing:0.12px;">u</div><div class="t b" style="right:383.20px;top:195.500px;font-size:7.8px;color:#1e1e28;letter-spacing:0px;">0.72</div><svg style="left:182.1px;top:216.0px" width="7.2" height="7.2" viewBox="0 0 20 20"><path d="M10 .8L12.9 7L19.6 7.7L14.600 12.300L16 19L10 15.600L4 19L5.400 12.300L.4 7.700L7.100 7Z" fill="#666"/></svg><div class="a" style="left:195.8px;top:215.2px;width:22.2px;height:8.4px;background:#cf1f1f;border-radius:1.500px"></div><div class="t b" style="left:197.80px;top:214.500px;font-size:6.41px;color:#fff;letter-spacing:0.002px;">TRỰC</div><div class="a" style="left:222.3px;top:214px;width:11.6px;height:11.1px;background:#fff;border-radius:1.500px"></div><svg style="left:224.700px;top:215.900px" width="6.800" height="6.800" viewBox="0 0 6.800 6.800"><g fill="none" stroke="#4a8ac8" stroke-width=".9"><rect x=".6" y=".5" width="5.600" height="1.900" rx=".6"/><rect x=".6" y="2.400" width="5.600" height="1.900" rx=".6"/><rect x=".6" y="4.300" width="5.600" height="1.900" rx=".6"/></g></svg><div class="a" style="left:175.6px;top:228px;width:482.4px;height:174px;background:#e5e5e5;"></div><div class="a" style="left:175.6px;top:228px;width:12.6px;height:174px;background:#e9e9e9;"></div><div class="a" style="left:188.2px;top:228px;width:0.7px;height:174px;background:#dadada;"></div><div class="a" style="left:175.6px;top:241.82px;width:482.4px;height:0.7px;background:#dadada;"></div><svg style="left:179.9px;top:232.06px" width="3.9" height="5.8" viewBox="0 0 3.9 5.8"><path d="M.5 .5L3.5 2.9L.5 5.3" fill="none" stroke="#444" stroke-width="1.15" stroke-linecap="round" stroke-linejoin="round"/></svg><svg style="left:192px;top:230.46px" width="8.8" height="8.8" viewBox="0 0 20 20"><path d="M10 .8L12.9 7L19.6 7.7L14.600 12.300L16 19L10 15.600L4 19L5.400 12.300L.4 7.700L7.100 7Z" fill="#555"/></svg><div class="t" style="left:205.70px;top:230.500px;font-size:7.4px;color:#353535;letter-spacing:-0.439px;">SABA ELITE FRIENDLY Virtual PES 23 - PENALTY SHOOTOUTS</div><div class="a" style="left:175.6px;top:256.14px;width:482.4px;height:0.7px;background:#dadada;"></div><svg style="left:179.9px;top:246.38px" width="3.9" height="5.8" viewBox="0 0 3.9 5.8"><path d="M.5 .5L3.5 2.9L.5 5.3" fill="none" stroke="#444" stroke-width="1.15" stroke-linecap="round" stroke-linejoin="round"/></svg><svg style="left:192px;top:244.78px" width="8.8" height="8.8" viewBox="0 0 20 20"><path d="M10 .8L12.9 7L19.6 7.7L14.600 12.300L16 19L10 15.600L4 19L5.400 12.300L.4 7.700L7.100 7Z" fill="#555"/></svg><div class="t" style="left:205.70px;top:244.500px;font-size:7.43px;color:#353535;letter-spacing:-0.431px;">SABA ELITE FRIENDLY Virtual PES 21 - 5 Mins Play</div><div class="a" style="left:175.6px;top:270.46px;width:482.4px;height:0.7px;background:#dadada;"></div><svg style="left:179.9px;top:260.70000000000005px" width="3.9" height="5.8" viewBox="0 0 3.9 5.8"><path d="M.5 .5L3.5 2.9L.5 5.3" fill="none" stroke="#444" stroke-width="1.15" stroke-linecap="round" stroke-linejoin="round"/></svg><svg style="left:192px;top:259.1px" width="8.8" height="8.8" viewBox="0 0 20 20"><path d="M10 .8L12.9 7L19.6 7.7L14.600 12.300L16 19L10 15.600L4 19L5.400 12.300L.4 7.700L7.100 7Z" fill="#555"/></svg><div class="t" style="left:205.70px;top:258.500px;font-size:7.47px;color:#353535;letter-spacing:-0.428px;">SABA INTERNATIONAL FRIENDLY Virtual PES 21 - 20 Mins Play</div><div class="a" style="left:175.6px;top:284.78px;width:482.4px;height:0.7px;background:#dadada;"></div><svg style="left:179.9px;top:275.02000000000004px" width="3.9" height="5.8" viewBox="0 0 3.9 5.8"><path d="M.5 .5L3.5 2.9L.5 5.3" fill="none" stroke="#444" stroke-width="1.15" stroke-linecap="round" stroke-linejoin="round"/></svg><svg style="left:192px;top:273.42px" width="8.8" height="8.8" viewBox="0 0 20 20"><path d="M10 .8L12.9 7L19.6 7.7L14.600 12.300L16 19L10 15.600L4 19L5.400 12.300L.4 7.700L7.100 7Z" fill="#555"/></svg><div class="t" style="left:205.70px;top:273.500px;font-size:7.51px;color:#353535;letter-spacing:-0.431px;">SABA INTERNATIONAL FRIENDLY Virtual FC 24 - 16 Mins Play</div><div class="a" style="left:175.6px;top:299.09999999999997px;width:482.4px;height:0.7px;background:#dadada;"></div><svg style="left:179.9px;top:289.34000000000003px" width="3.9" height="5.8" viewBox="0 0 3.9 5.8"><path d="M.5 .5L3.5 2.9L.5 5.3" fill="none" stroke="#444" stroke-width="1.15" stroke-linecap="round" stroke-linejoin="round"/></svg><svg style="left:192px;top:287.74px" width="8.8" height="8.8" viewBox="0 0 20 20"><path d="M10 .8L12.9 7L19.6 7.7L14.600 12.300L16 19L10 15.600L4 19L5.400 12.300L.4 7.700L7.100 7Z" fill="#555"/></svg><div class="t" style="left:205.70px;top:287.500px;font-size:7.5px;color:#353535;letter-spacing:-0.440px;">SABA CLUB FRIENDLY Virtual FC 24 - 16 Mins Play</div><div class="a" style="left:175.6px;top:313.42px;width:482.4px;height:0.7px;background:#dadada;"></div><svg style="left:179.9px;top:303.6600000000001px" width="3.9" height="5.8" viewBox="0 0 3.9 5.8"><path d="M.5 .5L3.5 2.9L.5 5.3" fill="none" stroke="#444" stroke-width="1.15" stroke-linecap="round" stroke-linejoin="round"/></svg><svg style="left:192px;top:302.06000000000006px" width="8.8" height="8.8" viewBox="0 0 20 20"><path d="M10 .8L12.9 7L19.6 7.7L14.600 12.300L16 19L10 15.600L4 19L5.400 12.300L.4 7.700L7.100 7Z" fill="#555"/></svg><div class="t" style="left:205.70px;top:301.500px;font-size:7.44px;color:#353535;letter-spacing:-0.439px;">SABA CLUB FRIENDLY Virtual PES 21 - 15 Mins Play</div><div class="a" style="left:175.6px;top:327.74px;width:482.4px;height:0.7px;background:#dadada;"></div><svg style="left:179.9px;top:317.9800000000001px" width="3.9" height="5.8" viewBox="0 0 3.9 5.8"><path d="M.5 .5L3.5 2.9L.5 5.3" fill="none" stroke="#444" stroke-width="1.15" stroke-linecap="round" stroke-linejoin="round"/></svg><svg style="left:192px;top:316.38000000000005px" width="8.8" height="8.8" viewBox="0 0 20 20"><path d="M10 .8L12.9 7L19.6 7.7L14.600 12.300L16 19L10 15.600L4 19L5.400 12.300L.4 7.700L7.100 7Z" fill="#555"/></svg><div class="t" style="left:205.70px;top:316.500px;font-size:7.56px;color:#353535;letter-spacing:-0.389px;">Saba Soccer PinGoal</div><div class="a" style="left:175.6px;top:342.06px;width:482.4px;height:0.7px;background:#dadada;"></div><svg style="left:179.9px;top:332.30000000000007px" width="3.9" height="5.8" viewBox="0 0 3.9 5.8"><path d="M.5 .5L3.5 2.9L.5 5.3" fill="none" stroke="#444" stroke-width="1.15" stroke-linecap="round" stroke-linejoin="round"/></svg><svg style="left:192px;top:330.70000000000005px" width="8.8" height="8.8" viewBox="0 0 20 20"><path d="M10 .8L12.9 7L19.6 7.7L14.600 12.300L16 19L10 15.600L4 19L5.400 12.300L.4 7.700L7.100 7Z" fill="#555"/></svg><div class="t" style="left:205.70px;top:330.500px;font-size:7.67px;color:#353535;letter-spacing:-0.421px;">Saba Soccer PinGoal - World Cup</div><div class="a" style="left:175.6px;top:356.38px;width:482.4px;height:0.7px;background:#dadada;"></div><svg style="left:179.9px;top:346.62000000000006px" width="3.9" height="5.8" viewBox="0 0 3.9 5.8"><path d="M.5 .5L3.5 2.9L.5 5.3" fill="none" stroke="#444" stroke-width="1.15" stroke-linecap="round" stroke-linejoin="round"/></svg><svg style="left:192px;top:345.02000000000004px" width="8.8" height="8.8" viewBox="0 0 20 20"><path d="M10 .8L12.9 7L19.6 7.7L14.600 12.300L16 19L10 15.600L4 19L5.400 12.300L.4 7.700L7.100 7Z" fill="#555"/></svg><div class="t" style="left:205.70px;top:344.500px;font-size:7.69px;color:#353535;letter-spacing:-0.395px;">Saba Soccer PinGoal - Virtual League</div><div class="a" style="left:175.6px;top:370.7px;width:482.4px;height:0.7px;background:#dadada;"></div><svg style="left:179.9px;top:360.94000000000005px" width="3.9" height="5.8" viewBox="0 0 3.9 5.8"><path d="M.5 .5L3.5 2.9L.5 5.3" fill="none" stroke="#444" stroke-width="1.15" stroke-linecap="round" stroke-linejoin="round"/></svg><svg style="left:192px;top:359.34000000000003px" width="8.8" height="8.8" viewBox="0 0 20 20"><path d="M10 .8L12.9 7L19.6 7.7L14.600 12.300L16 19L10 15.600L4 19L5.400 12.300L.4 7.700L7.100 7Z" fill="#555"/></svg><div class="t" style="left:205.70px;top:358.500px;font-size:7.63px;color:#353535;letter-spacing:-0.414px;">Saba Soccer PinGoal - Super League</div><div class="a" style="left:175.6px;top:385.02px;width:482.4px;height:0.7px;background:#dadada;"></div><svg style="left:179.9px;top:375.26000000000005px" width="3.9" height="5.8" viewBox="0 0 3.9 5.8"><path d="M.5 .5L3.5 2.9L.5 5.3" fill="none" stroke="#444" stroke-width="1.15" stroke-linecap="round" stroke-linejoin="round"/></svg><svg style="left:192px;top:373.66px" width="8.8" height="8.8" viewBox="0 0 20 20"><path d="M10 .8L12.9 7L19.6 7.7L14.600 12.300L16 19L10 15.600L4 19L5.400 12.300L.4 7.700L7.100 7Z" fill="#555"/></svg><div class="t" style="left:205.70px;top:373.500px;font-size:7.66px;color:#353535;letter-spacing:-0.430px;">Saba Soccer PinGoal Max - Asian Cup</div><div class="a" style="left:175.6px;top:399.34px;width:482.4px;height:0.7px;background:#dadada;"></div><svg style="left:179.9px;top:389.58000000000004px" width="3.9" height="5.8" viewBox="0 0 3.9 5.8"><path d="M.5 .5L3.5 2.9L.5 5.3" fill="none" stroke="#444" stroke-width="1.15" stroke-linecap="round" stroke-linejoin="round"/></svg><svg style="left:192px;top:387.98px" width="8.8" height="8.8" viewBox="0 0 20 20"><path d="M10 .8L12.9 7L19.6 7.7L14.600 12.300L16 19L10 15.600L4 19L5.400 12.300L.4 7.700L7.100 7Z" fill="#555"/></svg><div class="t" style="left:205.70px;top:387.500px;font-size:7.68px;color:#353535;letter-spacing:-0.427px;">Saba Soccer PinGoal Max - Copa América</div><div class="a" style="left:658.8px;top:65.8px;width:4.6px;height:12px;background:#b2b2b2;border-radius:1.500px 0 0 1.500px"></div><div class="a" style="left:660px;top:70.6px;width:3px;height:0.5px;background:#dcdcdc;"></div><div class="a" style="left:660px;top:72.2px;width:3px;height:0.5px;background:#dcdcdc;"></div>
<div class="a" style="left:663.4px;top:63.7px;width:119px;height:68.2px;background:#fff;border-radius:1.5px"></div><div class="a" style="left:665.3px;top:66px;width:115.1px;height:28px;background:#c8222c;border-radius:1px;overflow:hidden;background:linear-gradient(90deg,#b81a24 0,#cf262e 30%,#de2c32 60%,#c8222a 100%)"><svg style="left:0;top:0" width="115.1" height="28" viewBox="0 0 115.1 28">
<circle cx="7.200" cy="13.200" r="6.100" fill="#f3dede"/><circle cx="7.200" cy="13.200" r="5" fill="none" stroke="#c8323a" stroke-width=".7"/><path d="M4.800 16.500L5.500 12L7.200 9L9 12L9.700 16.500H8.200L7.200 13.500L6.200 16.500Z" fill="#c8323a"/><circle cx="7.200" cy="10.200" r="1.100" fill="#c8323a"/>
<path d="M71 28L72 20C72 17 75 16 78 16H88C91 16 93.500 17.500 94 20L95 28Z" fill="#e9e4de"/>
<path d="M74.500 8C74.500 2 79 -1 84 -1C89.500 -1 94 3 93.500 9C93.500 13 90.500 16.500 84 16.500C78.500 16.500 74.500 13.500 74.500 8Z" fill="#ecbc94"/>
<path d="M73.500 7C73.500 1 78 -2 84 -2C90 -2 94.500 1 94.500 7L92 4C88 2 80 2 76.500 4.500Z" fill="#4a4644"/><path d="M73.500 6L75.500 9V4.500ZM94.500 6L92.500 9V4.500Z" fill="#4a4644"/>
<path d="M76.500 6.500H82.500V9.800H76.500ZM85.500 6.500H91.500V9.800H85.500Z" fill="#f7f2ec" stroke="#2a2422" stroke-width=".9"/><path d="M82.500 7.800H85.500" stroke="#2a2422" stroke-width=".8"/>
<path d="M80 12.500C82 14.500 86.500 14.500 88.500 12.500C86.500 13.500 82 13.500 80 12.500Z" fill="#fff" stroke="#6a2a1a" stroke-width=".6"/>
<path d="M77 17H91L90 26H78Z" fill="#d8242c" stroke="#8a1218" stroke-width=".5"/><circle cx="84" cy="21.500" r="2.200" fill="#f4dada"/>
<path d="M69 28L69.500 19L71.500 13L73.500 13.500L73.500 18L76.500 19.500V28Z" fill="#ecbc94"/>
<path d="M92.500 8L95 5L98.500 4L101.500 2.800L105 3.500L108.500 3L111.500 5L114 7.500L115.100 11V17L113 21L110 23.500L106.500 26L102.500 26.300L98.500 25.500L95 23.500L92.500 20L91.300 15Z" fill="#f8c81c" stroke="#e89a18" stroke-width=".6"/>
<g font-family="Liberation Sans,sans-serif" font-weight="bold" font-style="italic" fill="#d82018" font-size="6.600"><text transform="translate(96.500 12) rotate(-9)" textLength="14.500" lengthAdjust="spacingAndGlyphs">Nhấn</text><text transform="translate(93.800 19.500) rotate(-9)" textLength="20.800" lengthAdjust="spacingAndGlyphs">vào đây!</text></g>
<path d="M102 21.500L105.500 23L102 24.500Z" fill="#d82018"/>
</svg></div><div class="t b" style="left:681.50px;top:70.000px;font-size:5.75px;color:#fff;letter-spacing:-0.220px;">Xem tin tức thể thao</div><div class="t b" style="left:681.50px;top:77.500px;font-size:10.04px;color:#fff;letter-spacing:-0.192px;">mới nhất</div><div class="a" style="left:665.3px;top:97.3px;width:115.1px;height:28px;background:#7a1418;border-radius:1px;overflow:hidden;background:linear-gradient(90deg,#6a0f14 0,#8c1a1c 35%,#a32420 60%,#7a1418 100%)"><svg style="left:0;top:0" width="115.1" height="28" viewBox="0 0 115.1 28">
<circle cx="15" cy="10.400" r="9.200" fill="#c8962e"/><circle cx="15" cy="10.400" r="8" fill="#e6bd55"/><circle cx="15" cy="10.400" r="6.600" fill="#5a0c10"/><circle cx="15" cy="10.400" r="5.400" fill="none" stroke="#e8c25a" stroke-width=".8"/>
<path d="M11.500 7.200L15 14.200L18.500 7.200" fill="none" stroke="#f0cc62" stroke-width="1.800" stroke-linejoin="round"/>
<g transform="rotate(-18 33 6)"><rect x="28" y="-1" width="8.500" height="12" rx="1" fill="#f4f2ee"/><circle cx="32.200" cy="5" r="1.600" fill="#c8202a"/></g>
<g transform="rotate(10 42 5)"><rect x="37" y="-2" width="8.500" height="12" rx="1" fill="#efece8"/><circle cx="41.200" cy="4" r="1.600" fill="#222"/></g>
<g transform="rotate(-30 30 14)"><rect x="25" y="8" width="8" height="11" rx="1" fill="#e8e4e0"/><circle cx="29" cy="13.500" r="1.400" fill="#c8202a"/></g>
<path d="M100 5L110 1L115.100 4V14L105 17L100 14Z" fill="#eef0f2"/><path d="M100 5L105 8V17L100 14Z" fill="#c9ced4"/><path d="M106 7L110 4.500L111 9L107.500 11.500Z" fill="#3a7ac8"/>
<path d="M98 17L106 15L112 18V26L104 28L98 25Z" fill="#e6e8ea"/><path d="M101 19.500H105V24H101Z" fill="#d83a3a"/>
<ellipse cx="70" cy="1" rx="5" ry="2.800" fill="#e8a020"/><ellipse cx="85" cy="2" rx="5.500" ry="3" fill="#f0b428"/><circle cx="84" cy="2" r="1.800" fill="#fff3c8"/>
<ellipse cx="40" cy="28" rx="6" ry="2.500" fill="#e8b428"/><ellipse cx="62" cy="28.500" rx="7" ry="2.500" fill="#e8b428"/><ellipse cx="84" cy="28.500" rx="7" ry="2.500" fill="#d8a020"/><ellipse cx="74" cy="27" rx="4" ry="2" fill="#f4f0ea"/><ellipse cx="52" cy="27.500" rx="3.500" ry="1.800" fill="#2a2422"/>
<g font-family="Liberation Sans,sans-serif" font-weight="bold" font-style="italic" fill="#fbd81c" stroke="#5a1408" stroke-width="1.100" paint-order="stroke" stroke-linejoin="round">
<text x="33.300" y="14.700" font-size="9.300" textLength="66" lengthAdjust="spacingAndGlyphs">CỔNG GAME VIỆT</text>
<text x="34.100" y="22.700" font-size="9.300" textLength="64.400" lengthAdjust="spacingAndGlyphs">CHO NGƯỜI VIỆT</text></g>
</svg></div><div class="t" style="left:668.40px;top:115.500px;font-size:6.36px;color:#f4eaea;letter-spacing:-0.172px;">Vgaming</div><div class="a" style="left:712.4px;top:126.8px;width:3.8px;height:3.8px;background:#3a7cc0;border-radius:50%"></div><div class="a" style="left:720.8px;top:126.8px;width:3.8px;height:3.8px;background:#d2d2d2;border-radius:50%"></div><div class="a" style="left:729.1px;top:126.8px;width:3.8px;height:3.8px;background:#d2d2d2;border-radius:50%"></div><div class="a" style="left:780px;top:162px;width:24px;height:20.5px;background:#17603a;border-radius:3px;border:.8px solid #b8a860;background:linear-gradient(180deg,#1d6e42,#124a2c)"></div><svg style="left:785px;top:166.500px" width="11.500" height="11.500" viewBox="0 0 11.500 11.500"><g fill="#f3da7a"><path d="M6.500 1H10.500V5L9.200 3.700L7.400 5.500L6 4.100L7.800 2.300Z"/><path d="M5 10.500H1V6.500L2.300 7.800L4.100 6L5.500 7.400L3.700 9.200Z"/></g></svg>
<div class="a" style="left:0;top:0;width:800px;height:37px;background:#fff;box-shadow:0 1px 3px rgba(120,130,170,.25)">
<svg style="left:0;top:0" width="800" height="37" viewBox="0 0 800 37">
<defs>
<linearGradient id="gfe" x1="0" y1="0" x2="0" y2="1"><stop offset="0" stop-color="#e8901c"/><stop offset="1" stop-color="#c0740f"/></linearGradient>
<linearGradient id="gbet" x1="0" y1="0" x2="0" y2="1"><stop offset="0" stop-color="#43a05c"/><stop offset="1" stop-color="#1a6a38"/></linearGradient>
<linearGradient id="ggr" x1="0" y1="0" x2="0" y2="1"><stop offset="0" stop-color="#1fa84a"/><stop offset="1" stop-color="#0f8a3a"/></linearGradient>
</defs>
<g stroke="#444" stroke-width="1.1" fill="none" stroke-linecap="round"><path d="M13.2 14.2H21.5M13.2 18.6H24.5M13.2 23H21.5"/></g>
<path d="M22.6 16.6L25.4 18.6L22.6 20.6Z" fill="#444"/>
<text x="38.2" y="29.2" font-family="Liberation Sans,sans-serif" font-weight="bold" font-style="italic" font-size="24" fill="url(#gfe)" stroke="url(#gfe)" stroke-width="1.3" textLength="27.600" lengthAdjust="spacingAndGlyphs">FE</text>
<path d="M70 12H112.7L108.7 29.2H65.8Z" fill="url(#gbet)"/>
<text x="70" y="27" font-family="Liberation Sans,sans-serif" font-weight="bold" font-style="italic" font-size="18.2" fill="#fff" stroke="#fff" stroke-width="0.7" textLength="37.5" lengthAdjust="spacingAndGlyphs">BET</text>
<rect x="139.800" y="7" width="234.800" height="23.200" rx="2" fill="#e9eaee"/>
<circle cx="151.300" cy="18" r="3.900" fill="none" stroke="#6a6a6a" stroke-width="1"/><path d="M154.200 21L157.300 24" stroke="#6a6a6a" stroke-width="1" stroke-linecap="round"/>
<rect x="645" y="7" width="70" height="23" rx="1.5" fill="#f0a422"/>
<rect x="722" y="7" width="65" height="23" rx="1.5" fill="url(#ggr)"/>
<path d="M776 16.5L783.5 7L789 16.5Z" fill="#f3d27a"/>
<path d="M784 7.5C787 6 790.5 4 791.5 3C792.5 6 791 10 788 12Z" fill="#e8901c"/>
</svg><div class="t" style="left:162.20px;top:14.500px;font-size:7.0px;color:#959aa8;letter-spacing:-0.065px;">Tìm kiếm...</div><div class="t b" style="left:656.00px;top:14.500px;font-size:8.17px;color:#fff;letter-spacing:-0.075px;">ĐĂNG NHẬP</div><div class="t b" style="left:736.00px;top:14.500px;font-size:7.92px;color:#fff;letter-spacing:-0.103px;">ĐĂNG KÝ</div></div>
<div class="a" style="left:0px;top:388px;width:800px;height:14px;background:transparent;background:linear-gradient(180deg,rgba(0,0,0,0) 0,rgba(0,0,0,.03) 50%,rgba(0,0,0,.11) 100%)"></div><div class="a" style="left:-2px;top:399.5px;width:4px;height:4px;background:#555;border-radius:50%"></div><div class="a" style="left:798px;top:399.5px;width:4px;height:4px;background:#555;border-radius:50%"></div>
</div>
</body></html>
